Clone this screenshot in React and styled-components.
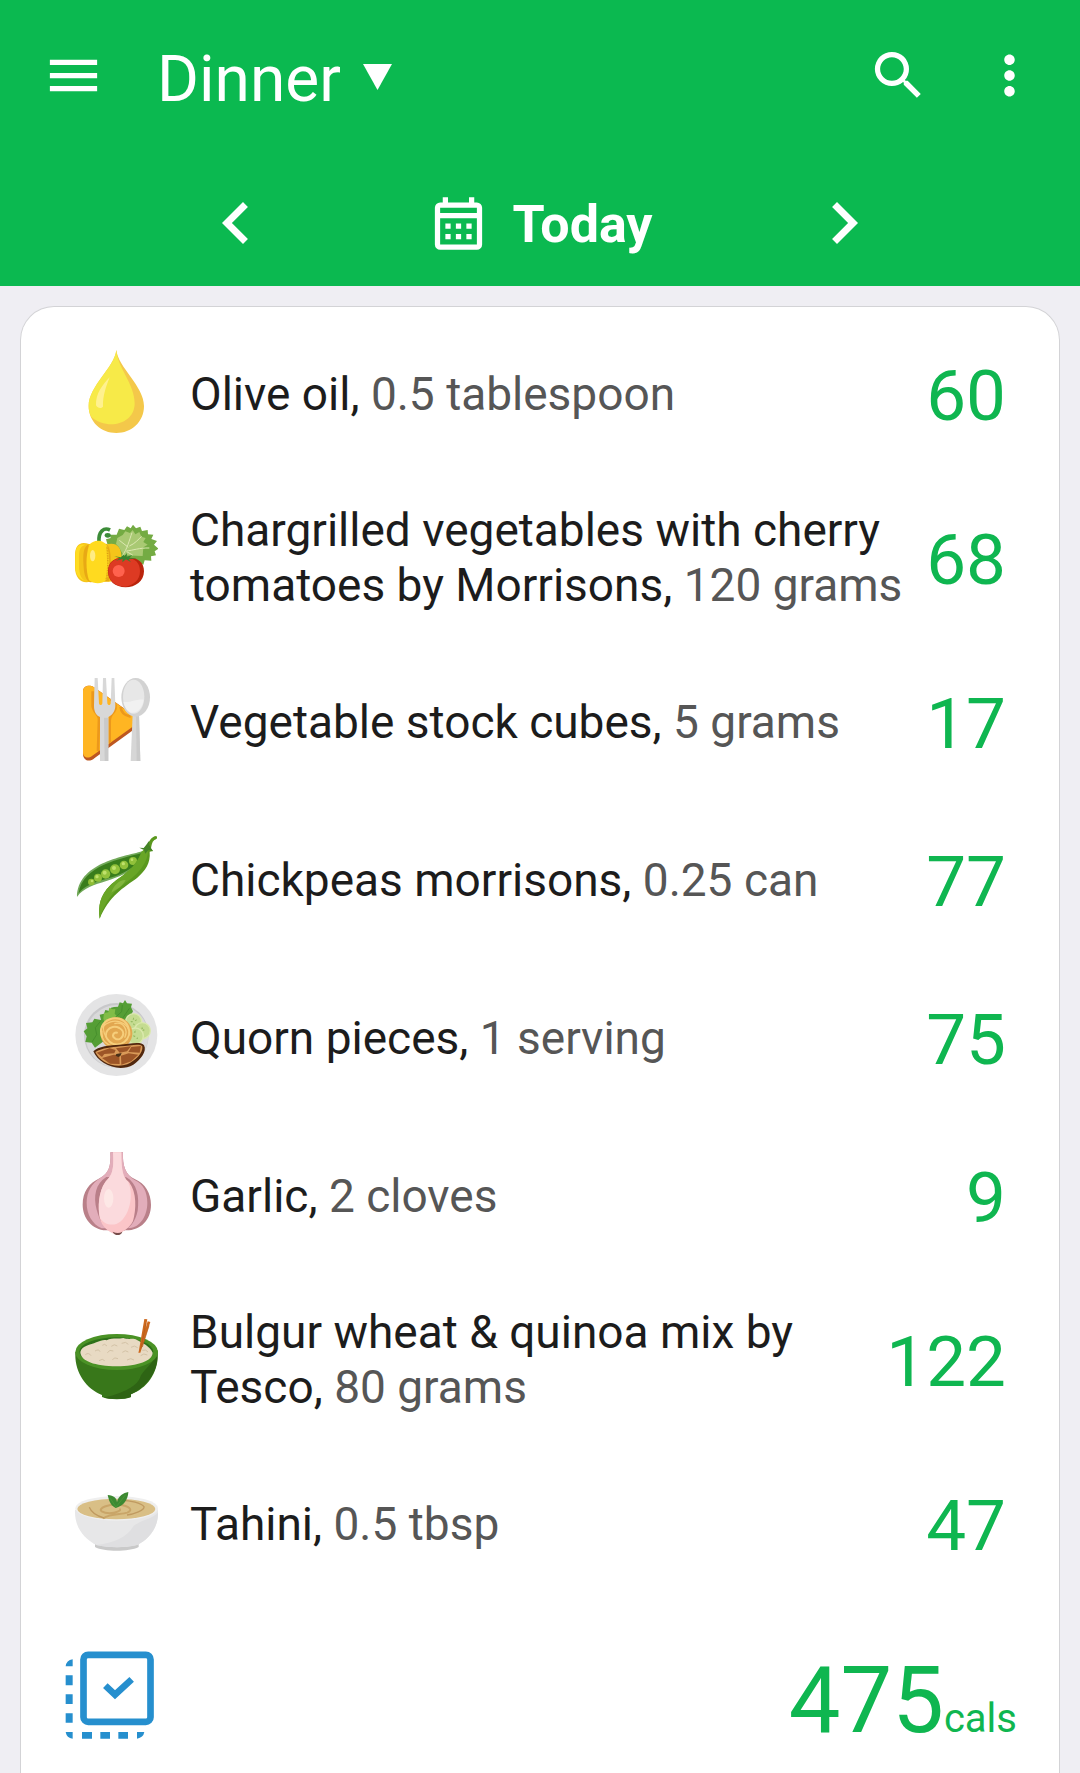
import React from 'react';
import styled, { createGlobalStyle } from 'styled-components';
import { MdMenu, MdSearch, MdMoreVert, MdChevronLeft, MdChevronRight } from 'react-icons/md';

const GlobalStyle = createGlobalStyle`
* {
  box-sizing: border-box;
}

body {
  margin: 0;
  background: #efeef3;
  font-family: Roboto, sans-serif;
}
`;

const Page = styled.div`
display: flex;
flex-direction: column;
min-height: 100vh;
`;

const Header = styled.header`
background: #0bb950;
color: white;
`;

const Toolbar = styled.div`
display: flex;
align-items: center;
height: 150px;
padding: 0 39px 0 42px;
`;

const IconButton = styled.button`
display: flex;
padding: 0;
border: none;
background: none;
color: inherit;
font-size: ${props => props.$size || 63}px;
cursor: pointer;
`;

const Actions = styled.div`
display: flex;
gap: 48px;
margin-left: auto;
`;

const MealPicker = styled.label`
display: flex;
align-items: center;
gap: 22px;
margin-left: 52px;
padding-top: 4px;
`;

const MealSelect = styled.select`
appearance: none;
height: 80px;
padding: 4px 0 0;
border: none;
background: transparent;
color: white;
font-family: inherit;
font-size: 64px;
`;

const DateBar = styled.nav`
display: flex;
justify-content: space-between;
align-items: center;
padding: 31px 18% 21px;
`;

const DateButton = styled.button`
display: flex;
align-items: center;
gap: 22px;
padding: 0;
border: none;
background: none;
color: white;
font-family: inherit;
font-size: 52px;
font-weight: 700;
line-height: 64px;
cursor: pointer;
`;

const DateLabel = styled.span`
padding-top: 4px;
`;

const Card = styled.main`
flex: 1;
margin: 20px 20px 0;
padding-top: 6px;
border: 1px solid #d3d3d6;
border-bottom: none;
border-radius: 34px 34px 0 0;
background: white;
`;

const FoodList = styled.ul`
margin: 0;
padding: 0;
list-style: none;
`;

const FoodRow = styled.li`
display: flex;
align-items: center;
min-height: 158px;
padding: 28px 53px;
`;

const FoodIcon = styled.svg`
flex: none;
width: 84px;
height: 84px;
`;

const FoodName = styled.p`
flex: 1;
margin: 0 20px 0 32px;
padding-top: 4px;
color: #1c1c1c;
font-size: 46px;
line-height: 55px;
`;

const Amount = styled.span`
color: #565656;
`;

const Calories = styled.span`
padding-top: 8px;
color: #0fb650;
font-size: 71px;
line-height: 84px;
`;

const TotalRow = styled.div`
display: flex;
justify-content: space-between;
align-items: flex-start;
padding: 50px 42px 28px 44px;
`;

const Total = styled.div`
padding-top: 6px;
color: #0fb650;
font-size: 92px;
line-height: 88px;
`;

const Unit = styled.span`
font-size: 40px;
line-height: 44px;
`;

const CalendarIcon = () => (
  <svg width="63" height="63" viewBox="0 0 24 24" fill="currentColor" aria-hidden="true">
    <path fillRule="evenodd" d="M6 2h2v2h8V2h2v2h1a2 2 0 0 1 2 2v14a2 2 0 0 1-2 2H5a2 2 0 0 1-2-2V6a2 2 0 0 1 2-2h1zM5 6v2h14V6zM5 10v10h14V10z" />
    <path d="M7 12h2v2H7zM11 12h2v2h-2zM15 12h2v2h-2zM7 16h2v2H7zM11 16h2v2h-2zM15 16h2v2h-2z" />
  </svg>
);

const SelectIcon = () => (
  <svg width="89" height="88" viewBox="195 92 267 264" fill="#268fce" aria-hidden="true">
    <rect x="250.5" y="103.500" width="201" height="201" rx="14" fill="none" stroke="#268fce" strokeWidth="20" />
    <path d="M316 196L345 223L395 177" fill="none" stroke="#268fce" strokeWidth="20" />
    <path d="M197 138q2-18 21-21v21zM197 165h21v30h-21zM197 222h21v29h-21zM197 279h21v28h-21zM197 335h21v20q-18-2-21-20zM246 335h30v20h-30zM301 335h29v20h-29zM355 335h29v20h-29zM411 335h22q-3 17-22 20z" />
  </svg>
);

const OilIcon = () => (
  <FoodIcon viewBox="42 30 252 252" aria-hidden="true">
    <path d="M169 30C174 82 252 138 252 198C252 246 214 279 169 279S86 246 86 198C86 138 164 82 169 30z" fill="#f4c84a" />
    <path d="M169 30C172 82 224 132 224 190C224 254 142 272 94 231C88 220 86 210 86 198C86 138 164 82 169 30z" fill="#f7ea48" />
    <path d="M149 112C138 140 128 168 129 200C123 207 113 205 108 196C107 160 128 134 149 112z" fill="#fff18f" />
  </FoodIcon>
);

const VegetablesIcon = () => (
  <FoodIcon viewBox="42 40 252 252" aria-hidden="true">
    <path d="M138 116L152 112L149 102L170 102L177 84L193 88L201 77L212 83L219 72L228 83L241 78L246 91L263 88L264 101L280 102L274 115L291 121L282 132L295 144L284 152L288 164L273 167L274 180L254 179L250 192L150 158z" fill="#74ab43" />
    <path d="M172 112L188 103L196 92L210 97L218 88L226 101L238 94L244 108L257 112L250 124L263 132L250 140L248 166L190 164L176 138L168 130z" fill="#a9c973" />
    <path d="M186 166C202 145 207 121 216 96M208 136C225 129 235 116 245 107M199 151C219 149 239 141 268 142M205 140L178 119M200 153L218 163" fill="none" stroke="#dce8b1" strokeWidth="3" />
    <path d="M117 123C115 92 132 79 150 88" fill="none" stroke="#3c8c38" strokeWidth="11" />
    <ellipse cx="143" cy="104" rx="9" ry="7" fill="#3c8c38" />
    <path d="M87 130C57 120 45 137 45 165V200C45 235 67 252 94 242L145 243C181 244 186 206 185 174C185 133 165 123 136 132z" fill="#f5c51a" />
    <path d="M76 132C57 139 57 151 57 178V202C59 231 69 241 84 241C61 240 48 226 46 202V165C46 138 56 128 76 132z" fill="#ffdc22" />
    <path d="M83 132C66 142 70 179 71 200C72 220 77 239 90 245L148 242C153 200 158 145 139 129z" fill="#e8a915" />
    <path d="M87 134C99 115 132 115 142 137C149 167 151 217 139 239C126 251 101 251 87 239C77 211 77 164 87 134z" fill="#ffda1f" />
    <path d="M141 138C144 169 146 208 138 240" fill="none" stroke="#dca014" strokeWidth="5" strokeDasharray="3 2" />
    <ellipse cx="98" cy="165" rx="8" ry="17" fill="#ffec85" />
    <path d="M197 172C226 167 253 180 252 212C252 242 226 260 197 260C165 260 144 241 144 212C144 183 164 169 197 172z" fill="#ba240c" />
    <path d="M197 173C222 170 240 184 240 211C240 238 222 253 196 258C163 257 145 240 145 211C145 184 164 171 197 173z" fill="#dd3a23" />
    <path d="M163 167L183 170L190 162L193 167L201 157L200 168L217 163L208 171L231 174L206 175L213 185L198 176L187 185L188 175L168 180L180 173z" fill="#39852f" />
    <circle cx="176" cy="211" r="18" fill="#ff624e" />
  </FoodIcon>
);

const CutleryIcon = () => (
  <FoodIcon viewBox="42 36 252 252" aria-hidden="true">
    <path d="M69 78C68 61 86 54 102 64L225 150V188L104 276C88 291 69 283 69 264z" fill="#bd5720" />
    <path d="M69 78C68 61 86 54 102 64L220 148V181L96 270C82 280 69 272 69 260z" fill="#ffb522" />
    <path d="M98 76V119C98 136 117 145 117 158L114 255M152 100C169 112 169 126 162 137C151 149 148 155 149 174V231" fill="none" stroke="#ec981c" strokeWidth="8" />
    <path d="M182 123C183 139 196 149 212 152" fill="none" stroke="#ec981c" strokeWidth="8" />
    <path d="M104 36H113L117 112C117 119 127 119 127 112L129 36H138L142 112C143 119 152 119 152 112L155 36H163L166 118C166 137 156 148 145 153V285H120V153C108 148 102 137 102 119z" fill="#d8d8d8" />
    <path d="M132 155H145V285H134z" fill="#c9c9c9" />
    <path d="M218 145H237L241 285H212z" fill="#d6d6d6" />
    <path d="M228 145H237L241 285H230z" fill="#cacaca" />
    <ellipse cx="227" cy="94" rx="43" ry="58" fill="#d2d2d2" />
    <ellipse cx="221" cy="92" rx="32" ry="51" fill="#e7e7e7" />
    <path d="M190 107C210 113 226 97 251 101C246 143 203 160 190 107z" fill="#f1f1f1" />
  </FoodIcon>
);

const PeasIcon = () => (
  <FoodIcon viewBox="42 30 252 252" aria-hidden="true">
    <path d="M247 76C186 93 53 112 51 213C89 158 184 177 244 102z" fill="#72a95a" />
    <path d="M248 80C184 98 67 117 56 202C94 151 183 169 237 104z" fill="#397d1b" />
    <circle cx="94" cy="168" r="10" fill="#8fbd35" />
    <circle cx="114" cy="155" r="12" fill="#91c13a" />
    <circle cx="137" cy="144" r="14" fill="#92c33c" />
    <circle cx="165" cy="130" r="15" fill="#91c13a" />
    <circle cx="192" cy="117" r="13" fill="#91c13a" />
    <circle cx="219" cy="105" r="12" fill="#91c13a" />
    <g fill="#bfe16b">
      <circle cx="96" cy="165" r="4" />
      <circle cx="111" cy="152" r="5" />
      <circle cx="134" cy="140" r="6" />
      <circle cx="162" cy="126" r="6" />
      <circle cx="190" cy="113" r="5" />
      <circle cx="216" cy="101" r="4" />
    </g>
    <path d="M245 77L261 64C265 48 274 31 289 30C294 36 290 40 283 42C275 49 275 58 273 67L279 75L269 77C272 112 256 133 232 155C190 186 148 208 119 278C114 241 120 208 151 178C181 148 221 137 245 77z" fill="#5a981e" />
    <path d="M245 77L263 62C270 101 240 137 211 160C175 187 140 209 119 278C114 241 120 208 151 178C181 148 221 137 245 77z" fill="#68a526" />
    <path d="M197 162C177 161 160 180 154 200C172 188 186 183 197 162z" fill="#82b63d" />
    <path d="M238 65L251 66C258 58 264 48 268 44C265 59 272 63 279 76L266 71L256 83L252 72z" fill="#438326" />
  </FoodIcon>
);

const PlateIcon = () => (
  <FoodIcon viewBox="42 39 252 252" aria-hidden="true">
    <circle cx="169" cy="162" r="123" fill="#e4e4e5" />
    <circle cx="169" cy="163" r="97" fill="#c8c8ca" />
    <circle cx="171" cy="166" r="94" fill="#d9d9da" />
    <path d="M162 78L174 77L179 64L189 67L195 57L201 67L216 68L213 79L219 91L211 106L219 119L190 136L105 200L95 185L76 183L80 166L71 151L82 142L78 126L97 124L103 113L123 117L119 101L132 98L136 87L148 90L153 80z" fill="#559e35" />
    <path d="M130 112L132 96L145 94L148 80L158 85L166 84L164 98L176 111L155 126L133 125z" fill="#81bd47" />
    <path d="M96 183L110 161L106 140L123 119M165 110L185 92L187 72M183 119L208 82" fill="none" stroke="#468f2c" strokeWidth="3" />
    <g fill="#c5dc91" stroke="#dbe9ad" strokeWidth="4">
      <circle cx="221" cy="122" r="24" />
      <circle cx="247" cy="149" r="24" />
      <circle cx="226" cy="165" r="24" />
    </g>
    <g fill="#91b65d">
      <path d="M220 109l3 6-5 2zM231 115l-3 6-4-3zM211 120l8 1-3 4zM221 126l4 7-5-1zM246 137l3 6-5 2zM255 147l-7 3 1-5zM227 148l-1 8-5-2zM219 163l8 2-5 4zM232 168l2 6-5-1z" />
    </g>
    <circle cx="169" cy="157" r="48" fill="#e2a750" />
    <g fill="none" stroke="#f6ce7b" strokeWidth="6">
      <path d="M127 169C105 118 179 89 203 134C222 177 175 206 149 182C121 158 151 127 178 141C202 155 184 180 168 174C151 166 162 150 173 156" />
      <path d="M127 139C154 105 212 121 209 163M126 149C121 182 146 193 159 196M141 117C122 139 132 158 139 170M163 128C189 121 206 145 194 170" strokeWidth="4" />
    </g>
    <path d="M100 211C113 195 151 193 178 191C210 188 244 180 252 193C262 211 241 237 220 251C176 276 115 249 100 211z" fill="#52280e" />
    <path d="M106 213C128 200 154 200 180 196C213 194 238 186 247 196C250 217 226 239 202 250C161 263 119 243 106 213z" fill="#d99a58" />
    <path d="M110 215L149 202L167 207L163 217L133 219L126 228zM168 202L213 196L201 211L179 215zM214 198L243 195L239 215L205 213zM126 231L161 221L178 222L179 249L150 248zM183 224L206 217L235 221L214 241L184 251z" fill="#9c5527" />
    <path d="M169 219L185 216L181 225L175 228L167 224z" fill="#493019" />
  </FoodIcon>
);

const GarlicIcon = () => (
  <FoodIcon viewBox="42 32 252 252" aria-hidden="true">
    <path d="M151 33H189C187 73 196 101 224 113C256 126 273 156 273 190C273 236 242 267 199 267H138C97 265 68 232 68 190C68 151 86 126 120 110C145 98 154 76 151 33z" fill="#b98089" />
    <path d="M151 33H189C187 74 197 100 225 117C249 127 262 153 262 184C262 225 239 257 210 260L125 261C96 249 80 217 80 185C80 150 95 127 122 109C145 95 154 76 151 33z" fill="#e2adba" />
    <path d="M139 107C107 126 99 165 110 205C119 240 133 258 154 270H187C209 262 226 241 233 208C239 167 231 125 199 108z" fill="#b97f89" />
    <path d="M159 33H184C184 89 190 109 207 122C231 153 229 204 219 239C209 260 190 269 178 279H164C144 268 127 258 120 232C112 197 116 151 136 122C158 101 162 84 159 33z" fill="#fbc5c8" />
    <path d="M159 33H184C184 89 190 109 203 120C224 156 209 233 169 248C149 253 131 247 120 230C113 196 116 151 136 122C158 101 162 84 159 33z" fill="#fbdadd" />
    <ellipse cx="146" cy="171" rx="14" ry="28" fill="#fde8e6" />
    <path d="M158 271C169 276 178 276 187 271C184 283 164 286 158 271z" fill="#764c4a" />
  </FoodIcon>
);

const BulgurIcon = () => (
  <FoodIcon viewBox="42 29 252 252" aria-hidden="true">
    <path d="M46 137C43 198 77 246 126 266V272C147 281 195 281 213 272V264C263 246 299 194 293 132z" fill="#38771a" />
    <path d="M291 146C297 190 260 243 213 264V272C193 279 158 279 131 274C177 264 229 243 240 214C246 195 272 178 291 146z" fill="#2e6414" />
    <ellipse cx="170" cy="137" rx="124" ry="54" fill="#4a9225" />
    <ellipse cx="169" cy="136" rx="111" ry="43" fill="#2e711a" />
    <path d="M61 137C66 117 91 117 109 108C121 103 132 99 140 102C155 93 174 99 190 95C207 101 219 94 231 101C246 109 269 119 278 139C278 163 234 179 170 180C105 179 62 165 61 137z" fill="#e8dac3" />
    <path d="M76 145q10-8 17 3M105 134q12-7 15 2M117 163q11-8 17 0M142 139q7-11 18-5M154 120q9-9 18-1M157 160q7-9 17-3M185 111q13-7 20 3M187 138q9-9 18-1M201 161q12-8 21 0M213 123q10-8 20 1M242 148q9-9 20-2M247 132q11-4 17 5M127 117q7-7 14 2" fill="none" stroke="#d3c2a6" strokeWidth="3" />
    <path d="M253 38L262 39L244 130L236 137zM263 45L271 47L241 139L235 139z" fill="#cd681d" />
    <path d="M258 50L243 126M267 58L247 122" stroke="#b05a1a" strokeWidth="2" />
  </FoodIcon>
);

const TahiniIcon = () => (
  <FoodIcon viewBox="42 39 252 252" aria-hidden="true">
    <path d="M105 221H236V240C207 255 132 255 105 240z" fill="#c9c9c9" />
    <path d="M45 128C43 178 69 214 109 234C151 243 192 243 231 234C272 214 297 178 294 127z" fill="#e7e7e8" />
    <path d="M294 137C295 180 267 218 231 234C190 243 145 242 109 234C162 228 201 211 220 178C237 160 269 160 294 137z" fill="#dfdfe1" />
    <ellipse cx="170" cy="124" rx="124" ry="37" fill="#efefef" />
    <ellipse cx="169" cy="126" rx="117" ry="31" fill="#d9bf86" />
    <path d="M130 154C150 139 184 143 202 137C222 129 206 116 178 113C145 111 113 123 125 133C148 146 190 132 178 126" fill="none" stroke="#c9a568" strokeWidth="6" />
    <path d="M88 121C95 139 117 149 132 153M184 100C211 100 244 108 252 119C255 130 221 142 201 144" fill="none" stroke="#c09a60" strokeWidth="4" />
    <path d="M167 123C150 114 147 100 143 84C162 86 170 93 171 106C175 86 190 78 205 75C204 99 190 117 167 123z" fill="#3c8932" />
    <path d="M168 121L151 94M169 119L197 83" stroke="#4c9638" strokeWidth="3" />
  </FoodIcon>
);

const foods = [
  { name: 'Olive oil', amount: '0.5 tablespoon', calories: 60, Icon: OilIcon },
  { name: 'Chargrilled vegetables with cherry tomatoes by Morrisons', amount: '120 grams', calories: 68, Icon: VegetablesIcon },
  { name: 'Vegetable stock cubes', amount: '5 grams', calories: 17, Icon: CutleryIcon },
  { name: 'Chickpeas morrisons', amount: '0.25 can', calories: 77, Icon: PeasIcon },
  { name: 'Quorn pieces', amount: '1 serving', calories: 75, Icon: PlateIcon },
  { name: 'Garlic', amount: '2 cloves', calories: 9, Icon: GarlicIcon },
  { name: 'Bulgur wheat & quinoa mix by Tesco', amount: '80 grams', calories: 122, Icon: BulgurIcon },
  { name: 'Tahini', amount: '0.5 tbsp', calories: 47, Icon: TahiniIcon },
];

const total = foods.reduce((sum, food) => sum + food.calories, 0);

export default function App() {
  return (
    <Page>
      <GlobalStyle />
      <Header>
        <Toolbar>
          <IconButton aria-label="Menu"><MdMenu /></IconButton>
          <MealPicker>
            <MealSelect aria-label="Meal" defaultValue="Dinner">
              <option>Dinner</option>
            </MealSelect>
            <svg width="29" height="26" viewBox="0 0 29 26" fill="currentColor" aria-hidden="true">
              <path d="M0 0h29L14.500 26z" />
            </svg>
          </MealPicker>
          <Actions>
            <IconButton aria-label="Search"><MdSearch /></IconButton>
            <IconButton aria-label="More options"><MdMoreVert /></IconButton>
          </Actions>
        </Toolbar>
        <DateBar>
          <IconButton $size={84} aria-label="Previous day"><MdChevronLeft /></IconButton>
          <DateButton><CalendarIcon /><DateLabel>Today</DateLabel></DateButton>
          <IconButton $size={84} aria-label="Next day"><MdChevronRight /></IconButton>
        </DateBar>
      </Header>
      <Card>
        <FoodList>
          {foods.map(({ name, amount, calories, Icon }) => (
            <FoodRow key={name}>
              <Icon />
              <FoodName>{name}, <Amount>{amount}</Amount></FoodName>
              <Calories>{calories}</Calories>
            </FoodRow>
          ))}
        </FoodList>
        <TotalRow>
          <IconButton aria-label="Select items"><SelectIcon /></IconButton>
          <Total>{total}<Unit>cals</Unit></Total>
        </TotalRow>
      </Card>
    </Page>
  );
}
